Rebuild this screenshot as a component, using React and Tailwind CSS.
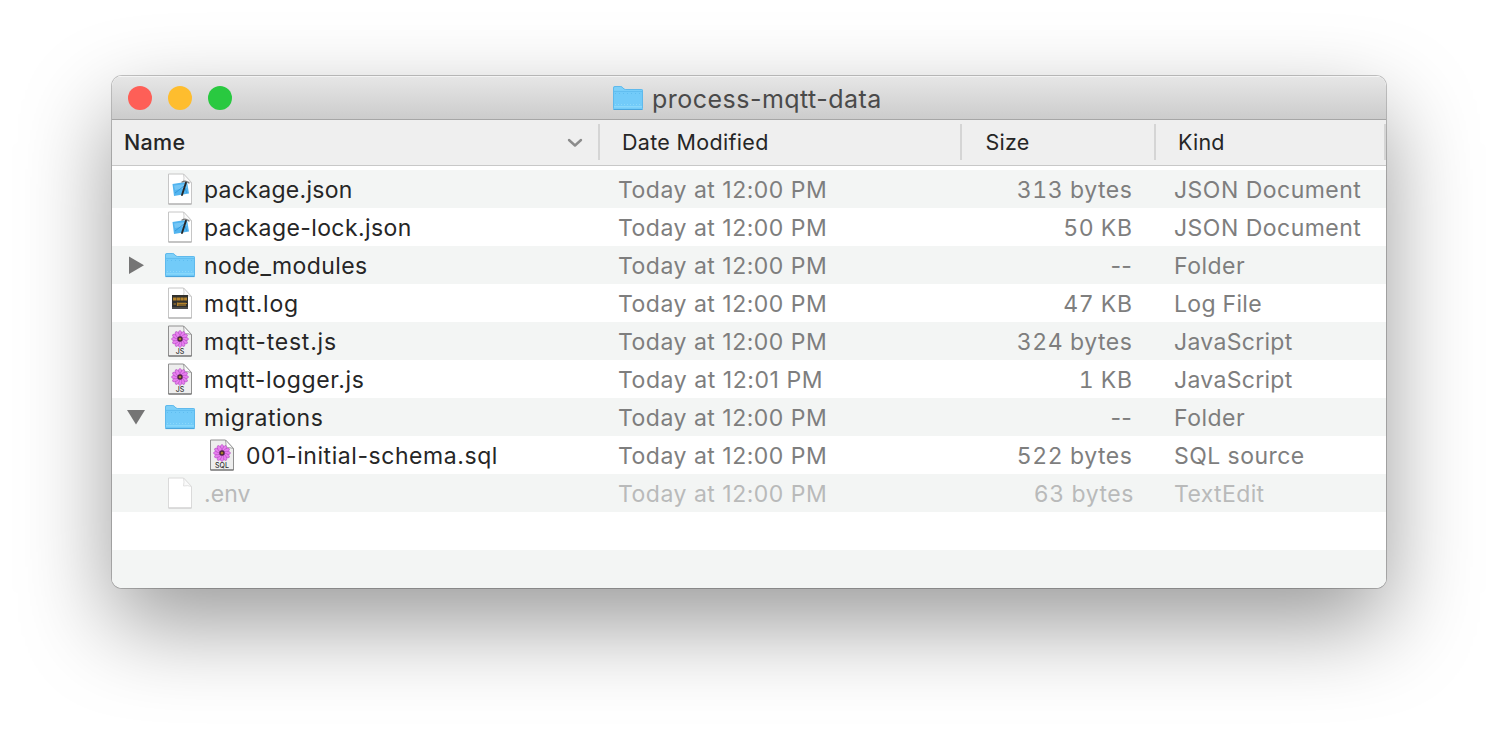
const files = [
  { name: "package.json", nt: "tracking-[0.3px]", date: "12:00 PM", size: "313 bytes", kind: "JSON Document", kt: "tracking-[0.48px]", icon: "json" },
  { name: "package-lock.json", nt: "tracking-[0.4px]", date: "12:00 PM", size: "50 KB", kind: "JSON Document", kt: "tracking-[0.48px]", icon: "json" },
  { name: "node_modules", nt: "tracking-[0.38px]", date: "12:00 PM", size: "--", kind: "Folder", kt: "tracking-[0.5px]", icon: "folder", arrow: "right" },
  { name: "mqtt.log", nt: "tracking-[0.75px]", date: "12:00 PM", size: "47 KB", kind: "Log File", kt: "tracking-[0.3px]", icon: "log" },
  { name: "mqtt-test.js", nt: "tracking-[0.77px]", date: "12:00 PM", size: "324 bytes", kind: "JavaScript", kt: "tracking-[0.3px]", icon: "JS" },
  { name: "mqtt-logger.js", nt: "tracking-[0.65px]", date: "12:01 PM", size: "1 KB", kind: "JavaScript", kt: "tracking-[0.3px]", icon: "JS" },
  { name: "migrations", nt: "tracking-[0.53px]", date: "12:00 PM", size: "--", kind: "Folder", kt: "tracking-[0.5px]", icon: "folder", arrow: "down" },
  { name: "001-initial-schema.sql", nt: "tracking-[0.56px]", date: "12:00 PM", size: "522 bytes", kind: "SQL source", kt: "tracking-[0.45px]", icon: "SQL", nested: true },
  { name: ".env", nt: "tracking-[0.1px]", date: "12:00 PM", size: "63 bytes", kind: "TextEdit", kt: "tracking-[0.38px]", icon: "blank", dim: true },
];

function Folder() {
  return (
    <svg viewBox="0 0 32 26" className="h-[26px] w-8 shrink-0">
      <path d="M1 3Q1 1 3 1H8.500Q10 1 11 2.500Q12 4 13.500 4H29.500Q31 4 31 5.500V8H1Z" fill="#7fd0f8" />
      <path d="M1 5.500H31V23.500Q31 25 29.500 25H2.500Q1 25 1 23.500Z" fill="#72cbf9" />
      <path d="M1.500 23.500V3Q1.500 1.500 3 1.500H8.500Q9.800 1.500 10.800 2.800Q12 4.500 13.500 4.500H29.500Q30.500 4.500 30.500 5.500V23.500" fill="none" stroke="#5bb7ea" strokeWidth=".9" />
      <path d="M2 6.500H30" stroke="#62bef0" strokeWidth="1" />
      <path d="M3 8.500H30" stroke="#5bb9ee" strokeWidth=".8" strokeDasharray="1 3" />
      <path d="M3 19.500H30" stroke="#90dbfb" strokeWidth=".8" strokeDasharray="1 2" />
      <path d="M2 21.800H30" stroke="#8ad8fb" strokeWidth="1.400" />
      <path d="M1.500 24.500H30.500" stroke="#4ba6dd" strokeWidth="1.200" />
    </svg>
  );
}

function Flower() {
  const petals = [0, 30, 60, 90, 120, 150, 180, 210, 240, 270, 300, 330];
  return (
    <g>
      <circle cx="13" cy="14" r="6.500" fill="#d564de" />
      {petals.map((a) => (
        <ellipse key={a} cx="13" cy="9.200" rx="1.750" ry="3.700" fill="#e97df0" stroke="#a848b8" strokeWidth=".5" transform={`rotate(${a} 13 14)`} />
      ))}
      <circle cx="13" cy="14" r="2.700" fill="#4a2440" />
      <circle cx="13" cy="14" r="1.300" fill="#a58328" />
    </g>
  );
}

function Doc({ type, dim }) {
  const code = type === "JS" || type === "SQL";
  const edge = dim ? "#dadada" : code ? "#909090" : "#c6c6c6";
  return (
    <svg viewBox="0 0 26 32" className="h-8 w-[26px] shrink-0">
      <path d="M1.500 1H16.500L24.500 9.500V31H1.500Z" fill={code ? "#eeeeee" : "#ffffff"} stroke={edge} strokeWidth="1" strokeLinejoin="round" />
      <path d="M1.500 31H24.500" stroke={dim ? "#cccccc" : code ? "#666666" : "#a5a5a5"} strokeWidth="1" />
      {type === "json" && (
        <g>
          <path d="M5.500 11L20 8.800L22 20.500L7 23Z" fill="#52b4ef" />
          <path d="M7 12.500L19 11L20 15L8 17Z" fill="#75c6f5" />
          <path d="M8 20L17 13L20 20" fill="none" stroke="#379bdc" strokeWidth="1" />
        </g>
      )}
      <path d="M16.500 1Q17.500 5 16.500 9Q20.500 8 24.500 9.500Z" fill="#fafafa" stroke={edge} strokeWidth=".8" strokeLinejoin="round" />
      {type === "json" && (
        <g fill="none" strokeLinecap="round">
          <path d="M19 9.500L15 22" stroke="#262626" strokeWidth="1.900" />
          <path d="M15 9Q18 7.300 20 8.800L22 10" stroke="#777777" strokeWidth="1.300" />
        </g>
      )}
      {type === "log" && (
        <g>
          <rect x="5" y="8" width="16" height="14" fill="#30302e" />
          <path d="M6 12H20" stroke="#b5842c" strokeWidth="3" strokeDasharray="3.300 .4" />
          <path d="M6.500 17H9M10.500 15.500V19M12 15.500V19M14 15.500V19M16 15.500V19M18 15.500V19M10 16.500H20" fill="none" stroke="#b5842c" strokeWidth="1.200" />
          <path d="M5 21H21" stroke="#555555" strokeWidth="1.500" />
        </g>
      )}
      {code && <Flower />}
      {code && (
        <text x="13" y="29.300" textAnchor="middle" fontFamily="Inter, sans-serif" fontSize="7" fontWeight="500" fill="#333333">
          {type}
        </text>
      )}
    </svg>
  );
}

function Row({ file, index }) {
  const f = file;
  const tone = f.dim ? "text-[#b9baba]" : "text-[#7e7e7e]";
  return (
    <div className={`flex h-[38px] items-center text-[23px] leading-[36px] ${index % 2 ? "bg-white" : "bg-[#f3f5f4]"}`}>
      <div className={`flex w-[506px] items-center ${f.nested ? "pl-[42px]" : ""}`}>
        <div className="flex w-[52px] items-center pl-[15px]">
          {f.arrow === "right" && <svg viewBox="0 0 18 18" className="size-[18px]"><path d="M2 0.500L17 9.200L2 18Z" fill="#757575" /></svg>}
          {f.arrow === "down" && <svg viewBox="0 0 18 18" className="size-[18px]"><path d="M0 2H18L9 16.500Z" fill="#757575" /></svg>}
        </div>
        <div className="flex w-10 items-center">
          {f.icon === "folder" ? <Folder /> : <div className="flex pl-[3px]"><Doc type={f.icon} dim={f.dim} /></div>}
        </div>
        <span className={`pt-0.5 whitespace-nowrap ${f.nt} ${f.dim ? "text-[#b9baba]" : "text-[#262626]"}`}>{f.name}</span>
      </div>
      <div className={`w-[360px] pt-0.5 whitespace-nowrap ${f.date === "12:01 PM" ? "tracking-[0.56px]" : "tracking-[0.5px]"} ${tone}`}>Today at {f.date}</div>
      <div className={`w-[156px] pt-0.5 text-right whitespace-nowrap ${f.icon === "folder" ? "pr-0.5 tracking-[0.2px]" : f.dim ? "tracking-[0.55px] tabular-nums" : "pr-[1.500px] tracking-[0.56px] tabular-nums"} ${tone}`}>{f.size}</div>
      <div className={`pt-0.5 pl-10 whitespace-nowrap ${f.kt} ${tone}`}>{f.kind}</div>
    </div>
  );
}

export default function App() {
  return (
    <div className="h-[736px] w-[1498px] overflow-hidden bg-white px-[112px] pt-[76px] font-['Inter',sans-serif]">
      <div className="h-[512px] w-[1274px] rounded-[10px] shadow-[0_0_0_1px_rgba(0,0,0,0.22),0_36px_90px_rgba(0,0,0,0.4)]">
        <div className="h-full overflow-hidden rounded-[10px] bg-white">
          <div className="flex h-11 items-center border-t border-b border-t-[#f4f4f4] border-b-[#a6a6a6] bg-linear-to-b from-[#e6e6e6] to-[#cccccc]">
            <div className="flex w-[500px] gap-4 pl-4">
              <div className="size-6 rounded-full bg-[#fe5f57]" />
              <div className="size-6 rounded-full bg-[#febd2e]" />
              <div className="size-6 rounded-full bg-[#29c940]" />
            </div>
            <Folder />
            <span className="pt-px pl-2 text-[25px] leading-9 tracking-[0.48px] text-[#4a4a4a]">process-mqtt-data</span>
          </div>
          <div className="flex h-[46px] items-center border-b border-[#c8c8c8] bg-[#efefef] pb-px text-[21.500px] text-[#262626]">
            <div className="flex w-[486px] items-center justify-between pr-[15px] pl-3">
              <span className="font-[550] tracking-[0.3px]">Name</span>
              <svg viewBox="0 0 16 10" className="mt-0.5 h-2.5 w-4"><path d="M2 2L8 7.500L14 2" fill="none" stroke="#8c8c8c" strokeWidth="2.400" strokeLinecap="round" strokeLinejoin="round" /></svg>
            </div>
            <div className="flex h-9 w-[362px] items-center border-l-2 border-[#d5d5d5] pl-[22px] tracking-[0.32px]">Date Modified</div>
            <div className="flex h-9 w-[194px] items-center border-l-2 border-[#d5d5d5] pl-[23.500px] tracking-[0.2px]">Size</div>
            <div className="flex h-9 w-[232px] items-center border-r-2 border-l-2 border-[#d5d5d5] pl-[22px] tracking-[0.2px]">Kind</div>
          </div>
          <div className="pt-1">
            {files.map((f, i) => <Row key={f.name} file={f} index={i} />)}
            <div className="h-[38px] bg-white" />
            <div className="h-[38px] bg-[#f3f5f4]" />
          </div>
        </div>
      </div>
    </div>
  );
}
